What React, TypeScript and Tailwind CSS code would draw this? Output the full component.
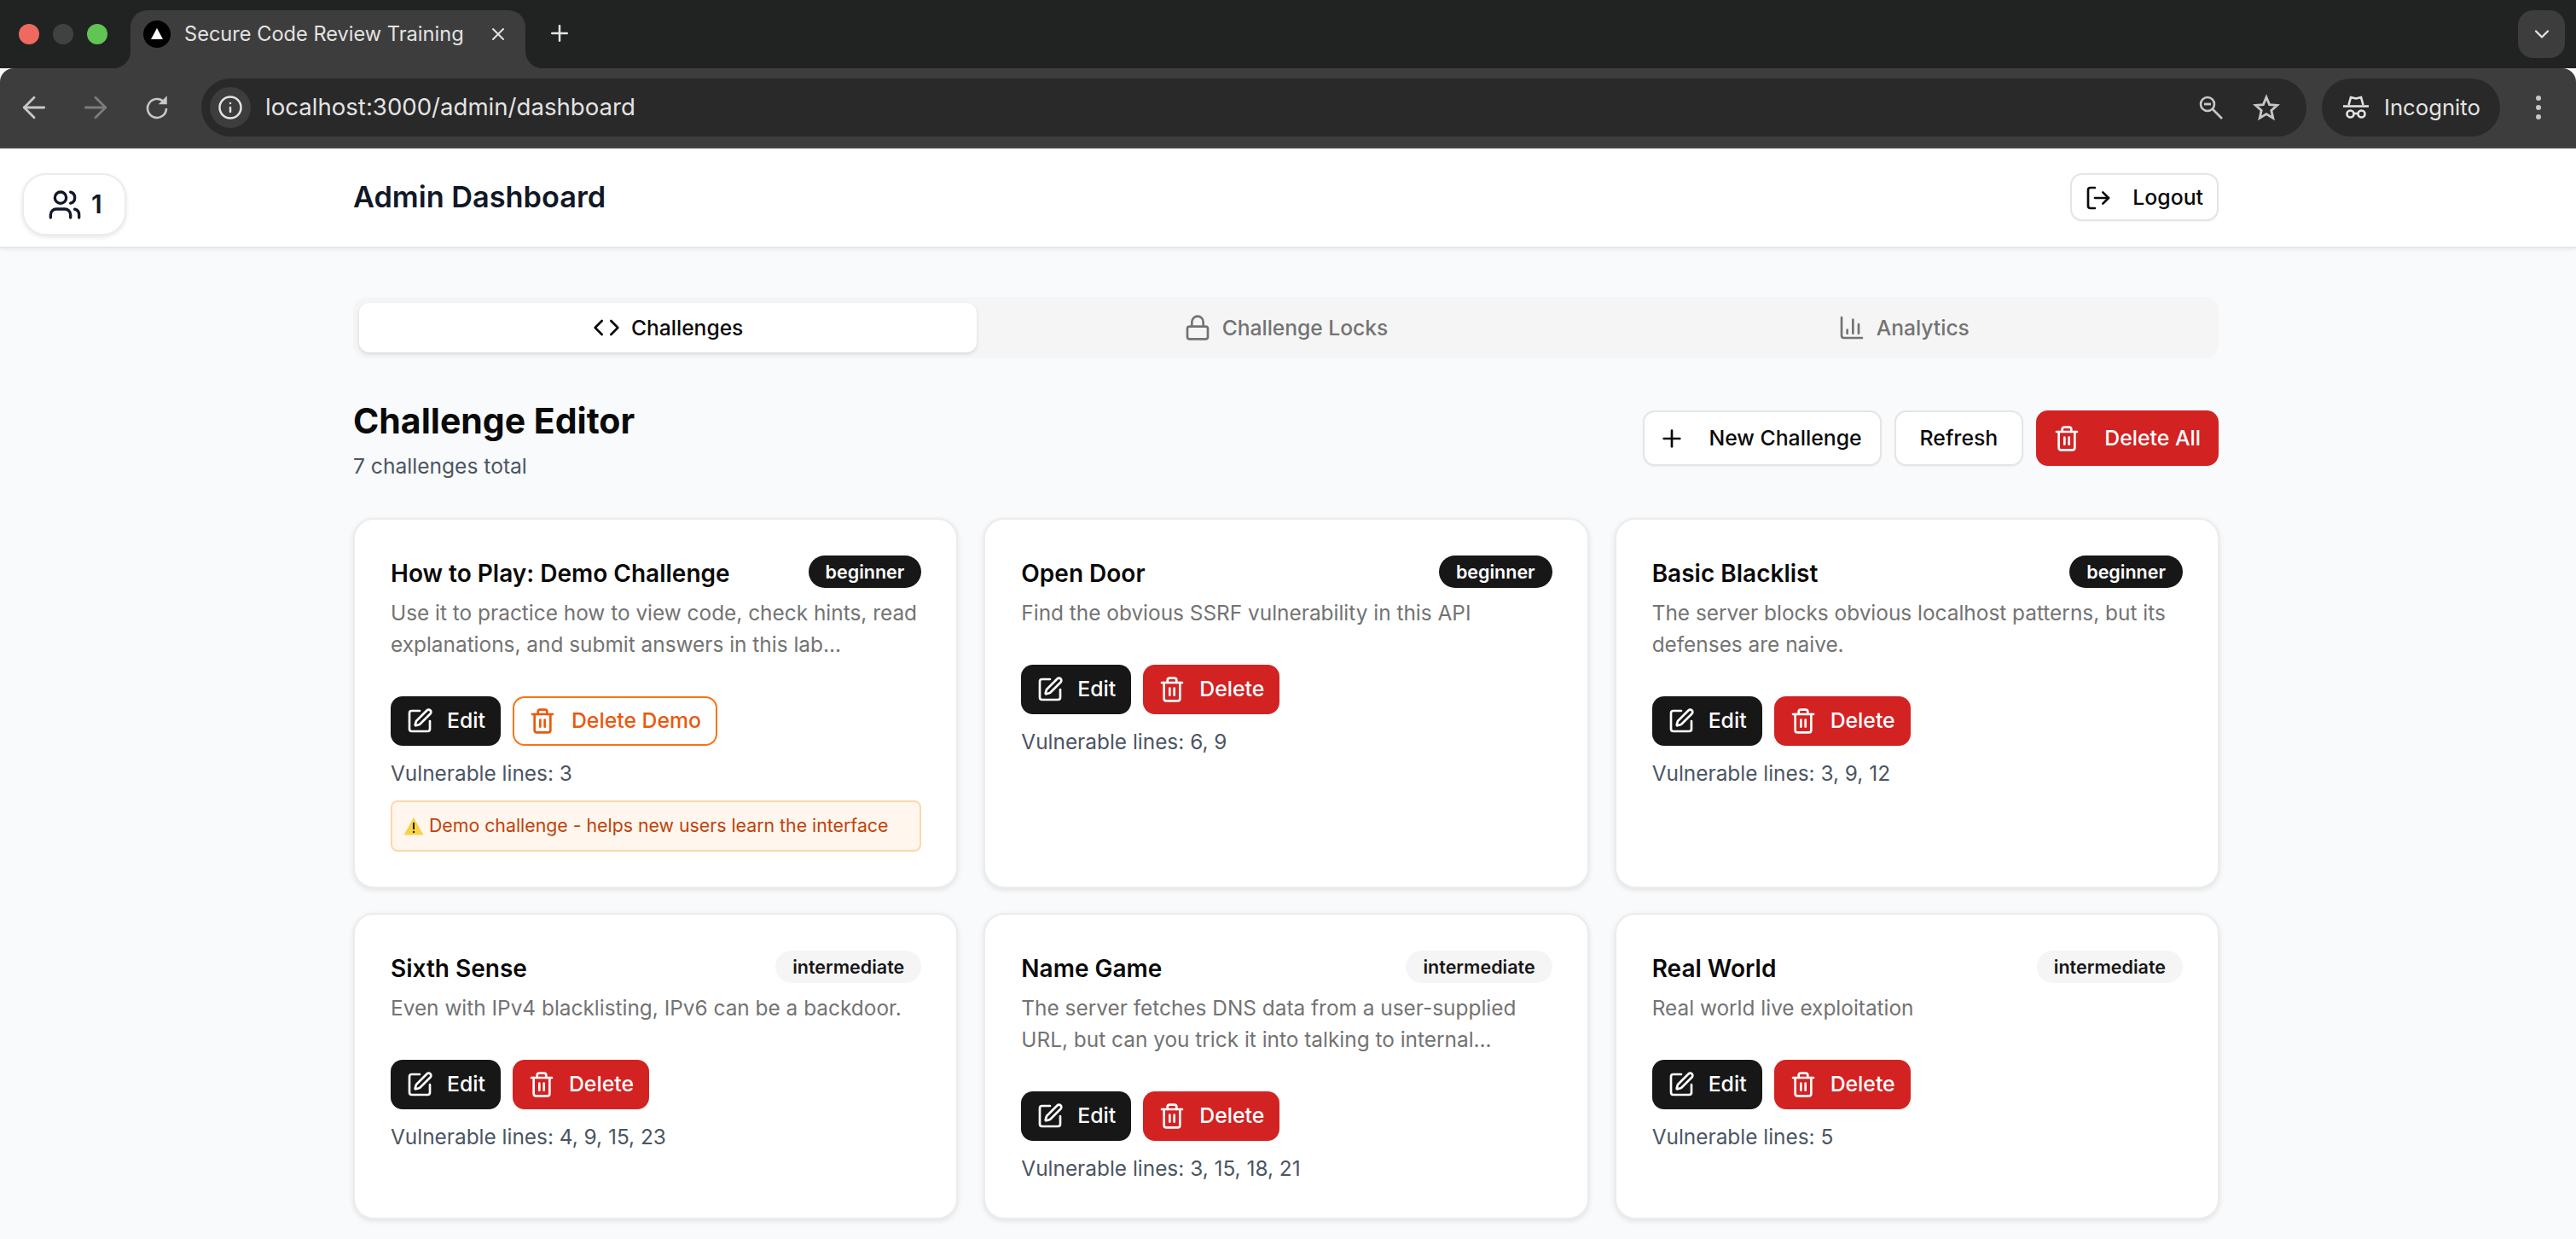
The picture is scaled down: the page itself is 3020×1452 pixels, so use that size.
import React from "react";
import { ArrowLeft, ArrowRight, Info, ChevronDown, Plus, X, Users, LogOut, Code, Lock, ChartColumn, Trash2, SquarePen } from "lucide-react";

function HatIcon() {
  return (
    <svg width="30" height="28" viewBox="0 0 30 28" fill="none" stroke="currentColor" strokeWidth="2.6">
      <path d="M6.5 11 L9 2 L15 3.5 L21 2 L23.5 11" />
      <path d="M0 12.5 H30" />
      <circle cx="8.5" cy="21.5" r="4" />
      <circle cx="21.5" cy="21.5" r="4" />
      <path d="M12.5 21 H17.5" />
    </svg>
  );
}

function ReloadIcon() {
  return (
    <svg width="28" height="28" viewBox="0 0 28 28" fill="none" stroke="currentColor" strokeWidth="2.6">
      <path d="M22.5 8 A11 11 0 1 0 25 15" />
      <path d="M25 2 V9.5 H17.5 Z" fill="currentColor" strokeWidth="1.5" />
    </svg>
  );
}

function ZoomIcon() {
  return (
    <svg width="30" height="30" viewBox="0 0 30 30" fill="none" stroke="currentColor" strokeWidth="2.6">
      <circle cx="11" cy="11" r="8" />
      <path d="M17 17 L28 28" />
      <path d="M7 11 H15" strokeWidth="2.8" />
    </svg>
  );
}

function StarIcon() {
  return (
    <svg width="32" height="32" viewBox="0 0 32 32" fill="none" stroke="currentColor" strokeWidth="2.8" strokeLinejoin="miter">
      <path d="M16 4 L19.6 12.6 L28.6 13.4 L21.8 19.4 L23.8 28.4 L16 23.6 L8.2 28.4 L10.2 19.4 L3.4 13.4 L12.4 12.6 Z" />
    </svg>
  );
}

function DotsIcon() {
  return (
    <svg width="8" height="30" viewBox="0 0 8 30" fill="currentColor">
      <circle cx="4" cy="4" r="3" />
      <circle cx="4" cy="15" r="3" />
      <circle cx="4" cy="26" r="3" />
    </svg>
  );
}

function WarnIcon() {
  return (
    <svg width="24" height="22" viewBox="0 0 24 22" className="shrink-0">
      <path d="M12 1 L23.5 21.5 H0.5 Z" fill="#f8d24c" />
      <path d="M12 7 V15" stroke="#222" strokeWidth="2" />
      <circle cx="12" cy="18" r="1.2" fill="#222" />
    </svg>
  );
}

type CardData = { title: string; level: "beginner" | "intermediate"; desc: string; lines: string; demo?: boolean };

const cards: CardData[] = [
  { title: "How to Play: Demo Challenge", level: "beginner", desc: "Use it to practice how to view code, check hints, read explanations, and submit answers in this lab...", lines: "3", demo: true },
  { title: "Open Door", level: "beginner", desc: "Find the obvious SSRF vulnerability in this API", lines: "6, 9" },
  { title: "Basic Blacklist", level: "beginner", desc: "The server blocks obvious localhost patterns, but its defenses are naive.", lines: "3, 9, 12" },
  { title: "Sixth Sense", level: "intermediate", desc: "Even with IPv4 blacklisting, IPv6 can be a backdoor.", lines: "4, 9, 15, 23" },
  { title: "Name Game", level: "intermediate", desc: "The server fetches DNS data from a user-supplied URL, but can you trick it into talking to internal...", lines: "3, 15, 18, 21" },
  { title: "Real World", level: "intermediate", desc: "Real world live exploitation", lines: "5" },
];

function Card({ c }: { c: CardData }) {
  return (
    <div className="rounded-[24px] border-2 border-[#ececec] bg-white pl-[42px] pr-[41px] pt-[42px] shadow-[0_2px_6px_rgba(0,0,0,0.1)]">
      <div className="flex items-start justify-between">
        <h3 className="text-[28px] leading-[42px] font-semibold text-[#0a0a0a]">{c.title}</h3>
        <span className={`flex h-[38px] items-center rounded-full px-[20px] text-[21.5px] font-semibold ${c.level === "beginner" ? "bg-[#171717] text-white" : "bg-[#f5f5f5] text-[#171717]"}`}>{c.level}</span>
      </div>
      <p className="mt-[7px] text-[24.4px] leading-[37px] text-[#737373]">{c.desc}</p>
      <div className="mt-[42px] flex gap-[14px]">
        <button className="flex h-[58px] items-center gap-[16px] rounded-[14px] bg-[#171717] px-[18px] text-[24.8px] font-medium text-white">
          <SquarePen size={32} />Edit
        </button>
        {c.demo ? (
          <button className="flex h-[58px] items-center gap-[18px] rounded-[14px] border-2 border-[#f97316] bg-white px-[17px] text-[24.8px] font-medium text-[#ea580c]">
            <Trash2 size={32} />Delete Demo
          </button>
        ) : (
          <button className="flex h-[58px] items-center gap-[16px] rounded-[14px] bg-[#d32222] px-[18px] text-[24.8px] font-medium text-white">
            <Trash2 size={32} />Delete
          </button>
        )}
      </div>
      <p className="mt-[14px] text-[24.4px] leading-[36px] text-[#4b5563]">Vulnerable lines: {c.lines}</p>
      {c.demo && (
        <div className="mt-[14px] flex h-[60px] items-center gap-[6px] rounded-[8px] border-2 border-[#fed7aa] bg-[#fff7ed] pl-[13px] text-[21.3px] text-[#c2410c]">
          <WarnIcon />
          <span>Demo challenge - helps new users learn the interface</span>
        </div>
      )}
    </div>
  );
}

function TabItem({ icon, label, active }: { icon: React.ReactNode; label: string; active?: boolean }) {
  return (
    <div className={`flex h-[58px] items-center justify-center gap-[13px] rounded-[12px] text-[24.6px] font-medium ${active ? "bg-white text-[#0a0a0a] shadow-[0_2px_4px_rgba(0,0,0,0.12)]" : "text-[#737373]"}`}>
      {icon}
      {label}
    </div>
  );
}

export default function App() {
  return (
    <div className="flex h-[1452px] flex-col overflow-hidden bg-[#f9fafb] font-['Inter',sans-serif]">
      {/* tab strip */}
      <div className="flex h-[80px] shrink-0 items-start bg-[#212322] pt-[12px]">
        <div className="ml-[22px] flex h-[56px] w-[131px] items-center gap-[16px]">
          <span className="h-[24px] w-[24px] rounded-full bg-[#ee6a5f]" />
          <span className="h-[24px] w-[24px] rounded-full bg-[#414141]" />
          <span className="h-[24px] w-[24px] rounded-full bg-[#61c454]" />
        </div>
        <div className="relative flex h-[68px] w-[463px] items-start rounded-t-[20px] bg-[#3d3d3d] pl-[15px] pt-[12px]">
          <div className="absolute bottom-0 left-[-20px] h-[20px] w-[20px] bg-[#3d3d3d]">
            <div className="h-full w-full rounded-br-[20px] bg-[#212322]" />
          </div>
          <div className="absolute bottom-0 right-[-20px] h-[20px] w-[20px] bg-[#3d3d3d]">
            <div className="h-full w-full rounded-bl-[20px] bg-[#212322]" />
          </div>
          <span className="flex h-[32px] w-[32px] shrink-0 items-center justify-center rounded-full bg-black">
            <svg width="18" height="18" viewBox="0 0 18 18"><path d="M9 2 L16 15 H2 Z" fill="#fff" /></svg>
          </span>
          <span className="ml-[16px] w-[330px] whitespace-nowrap text-[23.6px] leading-[32px] text-[#e3e3e3]">Secure Code Review Training</span>
          <X size={24} className="ml-[26px] mt-[4px] shrink-0 text-[#e3e3e3]" />
        </div>
        <Plus size={30} className="ml-[25px] mt-[12px] text-[#e3e3e3]" />
        <div className="ml-auto mr-[13px] flex h-[56px] w-[55px] items-center justify-center rounded-[18px] bg-[#3d3d3d]">
          <ChevronDown size={28} className="text-[#e3e3e3]" />
        </div>
      </div>
      {/* toolbar */}
      <div className="relative flex h-[94px] shrink-0 items-start rounded-t-[16px] border-b-2 border-[#454545] bg-[#3d3d3d] pt-[12px]">
        <div className="flex h-[68px] w-[236px] items-center pl-[20px] text-[#c7c7c7]">
          <ArrowLeft size={40} strokeWidth={1.7} />
          <ArrowRight size={40} strokeWidth={1.7} className="ml-[32px] text-[#7c7c7c]" />
          <span className="ml-[38px]"><ReloadIcon /></span>
        </div>
        <div className="flex h-[68px] w-[2468px] items-center rounded-full bg-[#292929] pl-[10px]">
          <span className="flex h-[48px] w-[48px] items-center justify-center rounded-full bg-[#3d3d3d]">
            <Info size={30} className="text-[#e3e3e3]" />
          </span>
          <span className="ml-[17px] text-[27.6px] text-[#e3e3e3]">localhost:3000/admin/dashboard</span>
          <span className="ml-auto text-[#c7c7c7]"><ZoomIcon /></span>
          <span className="ml-[34px] mr-[31px] text-[#c7c7c7]"><StarIcon /></span>
        </div>
        <div className="ml-[18px] flex h-[68px] w-[209px] items-center rounded-full bg-[#292929] pl-[25px] text-[#e3e3e3]">
          <HatIcon />
          <span className="ml-[18px] text-[25.7px]">Incognito</span>
        </div>
        <span className="ml-[41px] mt-[19px] text-[#c7c7c7]"><DotsIcon /></span>
      </div>
      {/* app header */}
      <header className="relative flex h-[117px] shrink-0 items-start border-b-2 border-[#e5e7eb] bg-white pl-[414px] pt-[29px] shadow-[0_2px_4px_rgba(0,0,0,0.06)]">
        <div className="absolute left-[26px] top-[29px] flex h-[73px] w-[122px] items-center rounded-[28px] border-2 border-[#ececec] bg-white pl-[28px] text-[#111827] shadow-[0_2px_5px_rgba(0,0,0,0.1)]">
          <Users size={40} />
          <span className="ml-[11px] text-[30px] font-semibold">1</span>
        </div>
        <div className="flex w-[2187px] items-center justify-between">
          <h1 className="text-[34.3px] leading-[56px] font-semibold text-[#111827]">Admin Dashboard</h1>
          <button className="flex h-[56px] items-center gap-[24px] rounded-[14px] border-2 border-[#e5e5e5] bg-white pl-[15px] pr-[16px] pt-[2px] text-[24.8px] font-medium text-[#0a0a0a] shadow-[0_1px_2px_rgba(0,0,0,0.05)]">
            <LogOut size={32} />Logout
          </button>
        </div>
      </header>
      {/* main */}
      <main className="ml-[414px] w-[2188px] pt-[57px]">
        <div className="grid h-[72px] w-[2187px] grid-cols-3 rounded-[16px] bg-[#f5f5f5] p-[7px]">
          <TabItem active icon={<Code size={32} />} label="Challenges" />
          <TabItem icon={<Lock size={32} />} label="Challenge Locks" />
          <TabItem icon={<ChartColumn size={32} />} label="Analytics" />
        </div>
        <div className="mt-[45px] flex w-[2187px] items-start justify-between">
          <div>
            <h2 className="text-[41px] leading-[56px] font-bold text-[#0a0a0a]">Challenge Editor</h2>
            <p className="mt-[5px] text-[24.6px] leading-[40px] text-[#4b5563]">7 challenges total</p>
          </div>
          <div className="mt-[16px] flex gap-[15px]">
            <button className="flex h-[65px] items-center gap-[27px] rounded-[14px] border-2 border-[#e5e5e5] bg-white pl-[16px] pr-[21px] text-[24.8px] font-medium text-[#0a0a0a] shadow-[0_1px_2px_rgba(0,0,0,0.05)]">
              <Plus size={32} />New Challenge
            </button>
            <button className="flex h-[65px] items-center rounded-[14px] border-2 border-[#e5e5e5] bg-white px-[28px] text-[24.8px] font-medium text-[#0a0a0a] shadow-[0_1px_2px_rgba(0,0,0,0.05)]">
              Refresh
            </button>
            <button className="flex h-[65px] items-center gap-[28px] rounded-[14px] bg-[#d32222] pl-[20px] pr-[21px] text-[24.8px] font-medium text-white">
              <Trash2 size={32} />Delete All
            </button>
          </div>
        </div>
        <div className="mt-[41px] grid grid-cols-3 grid-rows-[434px_359px] gap-x-[30px] gap-y-[29px]">
          {cards.map((c) => (
            <Card key={c.title} c={c} />
          ))}
        </div>
      </main>
    </div>
  );
}
